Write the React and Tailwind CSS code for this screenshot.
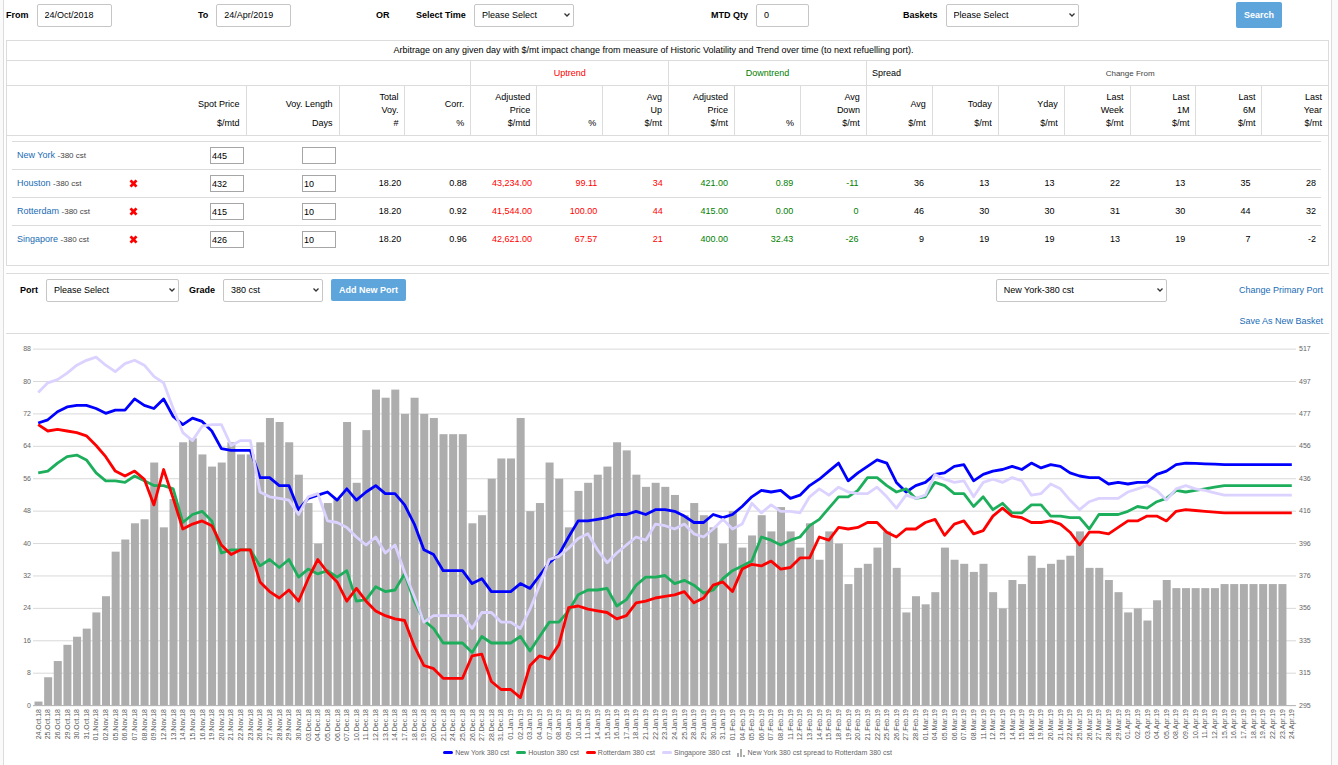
import { useState } from 'react'

const TREND_COLUMNS = [
  { label: 'Total Voy.', unit: '#' },
  { label: 'Corr.', unit: '%' },
  { label: 'Adjusted Price', unit: '$/mtd' },
  { label: '', unit: '%' },
  { label: 'Avg Up', unit: '$/mt' },
  { label: 'Adjusted Price', unit: '$/mt' },
  { label: '', unit: '%' },
  { label: 'Avg Down', unit: '$/mt' },
  { label: 'Avg', unit: '$/mt' },
  { label: 'Today', unit: '$/mt' },
  { label: 'Yday', unit: '$/mt' },
  { label: 'Last Week', unit: '$/mt' },
  { label: 'Last 1M', unit: '$/mt' },
  { label: 'Last 6M', unit: '$/mt' },
  { label: 'Last Year', unit: '$/mt' },
]

const PORTS = [
  { name: 'New York', spot: '445', days: '', values: [] },
  { name: 'Houston', spot: '432', days: '10', values: ['18.20', '0.88', '43,234.00', '99.11', '34', '421.00', '0.89', '-11', '36', '13', '13', '22', '13', '35', '28'] },
  { name: 'Rotterdam', spot: '415', days: '10', values: ['18.20', '0.92', '41,544.00', '100.00', '44', '415.00', '0.00', '0', '46', '30', '30', '31', '30', '44', '32'] },
  { name: 'Singapore', spot: '426', days: '10', values: ['18.20', '0.96', '42,621.00', '67.57', '21', '400.00', '32.43', '-26', '9', '19', '19', '13', '19', '7', '-2'] },
]

const FLAT_DAYS = 8

const NEW_YORK = [
  471, 473, 478, 481, 482, 482, 480, 477, 479, 479, 486, 482, 480, 486, 475, 470, 474, 472, 466, 455,
  454, 454, 454, 437, 437, 432, 432, 417, 424, 426, 428, 423, 430, 423, 428, 432, 427, 427, 420, 408,
  392, 389, 379, 379, 379, 371, 374, 366, 366, 366, 371, 368, 376, 384, 389, 400, 410, 410, 411, 412,
  414, 414, 416, 414, 417, 417, 416, 413, 409, 409, 414, 412, 414, 419, 425, 429, 428, 429, 424, 426,
  432, 436, 441, 446, 435, 440, 444, 448, 446, 434, 428, 432, 434, 439, 440, 444, 445, 435, 439, 441,
  442, 444, 442, 446, 443, 445, 444, 440, 438, 437, 437, 433, 434, 433, 434, 434, 439, 441, 445, 446,
  445.8, 445.5, 445.3, ...Array(FLAT_DAYS).fill(445),
]

const HOUSTON = [
  440, 441, 446, 450, 451, 448, 440, 435, 435, 434, 438, 435, 432, 432, 430, 409, 414, 416, 410, 390,
  392, 392, 392, 382, 386, 381, 386, 375, 380, 377, 379, 375, 379, 360, 361, 369, 366, 367, 377, 360,
  348, 343, 334, 334, 334, 328, 338, 334, 334, 334, 338, 329, 338, 347, 347, 354, 364, 367, 367, 368,
  357, 361, 370, 375, 375, 376, 371, 373, 370, 365, 367, 374, 379, 382, 385, 400, 398, 395, 398, 400,
  407, 411, 418, 425, 425, 429, 437, 437, 432, 428, 430, 424, 425, 434, 432, 427, 427, 419, 425, 417,
  421, 415, 415, 420, 420, 413, 413, 412, 412, 405, 414, 414, 414, 416, 419, 418, 422, 424, 429, 428,
  429, 430, 431, ...Array(FLAT_DAYS).fill(432),
]

const ROTTERDAM = [
  470, 466, 467, 466, 465, 463, 457, 450, 441, 438, 441, 436, 420, 442, 424, 405, 408, 410, 407, 395,
  389, 392, 392, 372, 366, 362, 367, 360, 374, 386, 378, 372, 360, 368, 360, 354, 351, 349, 348, 332,
  320, 318, 312, 312, 312, 326, 327, 310, 305, 305, 300, 320, 326, 324, 333, 356, 357, 355, 354, 353,
  349, 351, 359, 360, 362, 363, 364, 366, 359, 362, 370, 372, 366, 380, 383, 382, 385, 380, 381, 387,
  387, 400, 398, 406, 405, 406, 409, 409, 403, 400, 405, 405, 409, 411, 401, 408, 410, 402, 404, 413,
  418, 413, 412, 409, 409, 410, 408, 403, 395, 403, 403, 402, 406, 410, 410, 413, 413, 410, 416, 417,
  416.5, 416, 415.5, ...Array(FLAT_DAYS).fill(415),
]

const SINGAPORE = [
  490, 496, 498, 502, 507, 510, 512, 507, 503, 508, 510, 507, 500, 496, 480, 465, 460, 469, 470, 470,
  457, 460, 460, 428, 425, 424, 423, 414, 425, 427, 410, 409, 406, 400, 395, 400, 390, 395, 378, 363,
  347, 351, 351, 351, 351, 343, 353, 353, 347, 347, 343, 355, 370, 386, 388, 393, 399, 402, 392, 384,
  390, 395, 400, 398, 408, 407, 405, 408, 402, 400, 405, 411, 405, 408, 421, 415, 420, 416, 416, 415,
  425, 430, 426, 431, 428, 427, 427, 431, 425, 418, 426, 424, 426, 439, 436, 434, 435, 425, 434, 436,
  434, 437, 435, 426, 427, 433, 430, 423, 417, 422, 424, 424, 424, 428, 430, 432, 429, 423, 430, 432,
  430, 429, 427.5, ...Array(FLAT_DAYS).fill(426),
]

const SERIES = [
  { name: 'New York 380 cst', color: '#0000ff', data: NEW_YORK },
  { name: 'Houston 380 cst', color: '#1dae5c', data: HOUSTON },
  { name: 'Rotterdam 380 cst', color: '#ff0000', data: ROTTERDAM },
  { name: 'Singapore 380 cst', color: '#dcd2ff', data: SINGAPORE },
]

const MONTHS = ['Jan', 'Feb', 'Mar', 'Apr', 'May', 'Jun', 'Jul', 'Aug', 'Sep', 'Oct', 'Nov', 'Dec']
const RIGHT_TICKS = [295, 315, 335, 356, 376, 396, 416, 436, 456, 477, 497, 517]

function tradingDays() {
  const days = []
  const d = new Date(Date.UTC(2018, 9, 24))
  const end = Date.UTC(2019, 3, 24)
  while (d.getTime() <= end) {
    const wd = d.getUTCDay()
    if (wd !== 0 && wd !== 6) {
      days.push(`${String(d.getUTCDate()).padStart(2, '0')}.${MONTHS[d.getUTCMonth()]}.${String(d.getUTCFullYear()).slice(2)}`)
    }
    d.setUTCDate(d.getUTCDate() + 1)
  }
  return days
}

const DAYS = tradingDays()

// plot geometry in viewBox units
const BASE = 371.6
const TOP = 15.1
const xAt = i => 34.2 + i * 9.643
const yPrice = v => BASE - ((v - 295) / 222) * (BASE - TOP)
const ySpread = v => BASE - (v / 88) * (BASE - TOP)

const controlCls = 'h-[23px] rounded-xs border border-[#c6c6c6] bg-white px-[7px] outline-none focus:border-[#5ea5dc]'
const buttonCls = 'rounded-xs bg-[#5ea5dc] px-2 font-bold text-white hover:bg-[#4994cf]'
const linkCls = 'text-[#1a6cb5] hover:underline'

function Select({ width, option, label }) {
  return (
    <span className={`relative block ${width}`}>
      <select aria-label={label} className={`${controlCls} w-full appearance-none font-normal`}>
        <option>{option}</option>
      </select>
      <svg viewBox="0 0 6 4" className="pointer-events-none absolute top-[9px] right-1 h-1 w-[6px]" aria-hidden="true">
        <path d="M0.5 0.5 L3 3 L5.5 0.5" fill="none" stroke="#333" strokeWidth="1.3" />
      </svg>
    </span>
  )
}

function Filters() {
  const [from, setFrom] = useState('24/Oct/2018')
  const [to, setTo] = useState('24/Apr/2019')
  const [qty, setQty] = useState('0')

  return (
    <form
      onSubmit={e => e.preventDefault()}
      className="grid grid-cols-[192fr_178fr_40fr_295fr_192fr_333fr_95fr] items-center pt-[2px] pl-[2px]"
    >
      <label className="flex items-center gap-2 font-bold">
        From
        <input value={from} onChange={e => setFrom(e.target.value)} className={`${controlCls} w-[75px] font-normal`} />
      </label>
      <label className="flex items-center gap-2 font-bold">
        To
        <input value={to} onChange={e => setTo(e.target.value)} className={`${controlCls} w-[75px] font-normal`} />
      </label>
      <span className="font-bold">OR</span>
      <label className="flex items-center gap-2 font-bold">
        Select Time
        <Select width="w-[100px]" option="Please Select" />
      </label>
      <label className="flex items-center gap-2 font-bold">
        MTD Qty
        <input value={qty} onChange={e => setQty(e.target.value)} className={`${controlCls} w-[53px] font-normal`} />
      </label>
      <label className="flex items-center gap-2 font-bold">
        Baskets
        <Select width="w-[133px]" option="Please Select" />
      </label>
      <div>
        <button type="submit" className={`${buttonCls} h-[26px]`}>Search</button>
      </div>
    </form>
  )
}

function HeaderCell({ label, unit }) {
  return (
    <th className="border-l border-[#dcdcdc] px-[6px] py-[5px] text-right font-normal first:border-l-0">
      <div className="flex h-[26px] items-center justify-end leading-[13px]">
        <span className={label.startsWith('Spot') || label.startsWith('Voy') ? '' : 'w-min'}>{label}</span>
      </div>
      <div className="leading-[13px]">{unit}</div>
    </th>
  )
}

function valueColor(i) {
  if (i >= 2 && i <= 4) return 'text-[#ff0000]'
  if (i >= 5 && i <= 7) return 'text-[#008000]'
  return 'text-black'
}

function CrossIcon() {
  return (
    <svg viewBox="0 0 9 9" className="size-[9px]" aria-hidden="true">
      <path d="M2.5 0.5 L4.5 2.5 L6.5 0.5 L8.5 2.3 L6.4 4.5 L8.5 6.7 L6.5 8.5 L4.5 6.5 L2.5 8.5 L0.5 6.7 L2.6 4.5 L0.5 2.3 Z" fill="#ff0000" />
    </svg>
  )
}

function Arbitrage() {
  const [ports, setPorts] = useState(PORTS)

  function update(name, key, val) {
    setPorts(prev => prev.map(p => (p.name === name ? { ...p, [key]: val } : p)))
  }

  return (
    <section className="mt-3 mr-[2px] ml-[2px] border border-[#dcdcdc]">
      <p className="py-[3px] pr-7 text-center leading-[13px]">
        Arbitrage on any given day with $/mt impact change from measure of Historic Volatility and Trend over time (to next refuelling port).
      </p>
      <table aria-label="Arbitrage columns" className="w-full table-fixed border-collapse border-y border-[#dcdcdc]">
        <colgroup>
          <col className="w-[239px]" />
          <col className="w-[93px]" />
          {TREND_COLUMNS.map((c, i) => <col key={i} />)}
        </colgroup>
        <thead>
          <tr className="h-[25px] border-b border-[#dcdcdc]">
            <td colSpan={4} />
            <th colSpan={3} className="border-l border-[#dcdcdc] font-normal text-[#ff0000]">Uptrend</th>
            <th colSpan={3} className="border-l border-[#dcdcdc] font-normal text-[#008000]">Downtrend</th>
            <th className="border-l border-[#dcdcdc] pl-[5px] text-left font-normal">Spread</th>
            <th colSpan={6} className="text-[8px] font-normal text-[#444]">Change From</th>
          </tr>
          <tr>
            <HeaderCell label="Spot Price" unit="$/mtd" />
            <HeaderCell label="Voy. Length" unit="Days" />
            {TREND_COLUMNS.map((c, i) => <HeaderCell key={i} label={c.label} unit={c.unit} />)}
          </tr>
        </thead>
      </table>

      <div className="pt-[5px] pr-[7px] pb-[11px] pl-[5px]">
        <table aria-label="Ports" className="w-full table-fixed border-collapse">
          <colgroup>
            <col className="w-[114px]" />
            <col className="w-[80px]" />
            <col className="w-[92px]" />
            <col className="w-[43px]" />
            {TREND_COLUMNS.map((c, i) => <col key={i} />)}
          </colgroup>
          <tbody>
            {ports.map(p => (
              <tr key={p.name} className="h-7 border-t border-[#dcdcdc]">
                <td className="pl-[5px] whitespace-nowrap">
                  <a href="#port" className={linkCls}>{p.name}</a>{' '}
                  <span className="text-[8px] text-[#444]">-380 cst</span>
                </td>
                <td className="pl-[3px]">
                  {p.values.length > 0 && (
                    <button
                      type="button"
                      aria-label={`Remove ${p.name}`}
                      onClick={() => setPorts(prev => prev.filter(x => x.name !== p.name))}
                      className="flex"
                    >
                      <CrossIcon />
                    </button>
                  )}
                </td>
                <td className="pl-1">
                  <input
                    aria-label={`${p.name} spot price`}
                    value={p.spot}
                    onChange={e => update(p.name, 'spot', e.target.value)}
                    className="block h-[17px] w-[34px] border border-[#a6a6a6] px-px"
                  />
                </td>
                <td className="pl-1">
                  <input
                    aria-label={`${p.name} voyage length`}
                    value={p.days}
                    onChange={e => update(p.name, 'days', e.target.value)}
                    className="block h-[17px] w-[34px] border border-[#a6a6a6] px-px"
                  />
                </td>
                {TREND_COLUMNS.map((c, i) => (
                  <td key={i} className={`pr-[5px] text-right ${valueColor(i)}`}>{p.values[i]}</td>
                ))}
              </tr>
            ))}
          </tbody>
        </table>
      </div>
    </section>
  )
}

function PortControls() {
  return (
    <section className="mt-[7px] mr-[2px] ml-[2px] border-y border-[#dcdcdc] py-[5px]">
      <div className="grid grid-cols-[989fr_241fr_92fr] items-center">
        <div className="flex items-center pl-[14px]">
          <label className="flex items-center gap-2 font-bold">
            Port
            <Select width="w-[133px]" option="Please Select" />
          </label>
          <label className="ml-[10px] flex items-center gap-2 font-bold">
            Grade
            <Select width="w-[100px]" option="380 cst" />
          </label>
          <button type="button" className={`${buttonCls} ml-2 h-[22px]`}>Add New Port</button>
        </div>
        <Select width="w-[171px]" option="New York-380 cst" label="Primary port" />
        <a href="#primary" className={`${linkCls} pr-[6px] text-right whitespace-nowrap`}>Change Primary Port</a>
      </div>
      <div className="mt-[13px] pr-[6px] text-right leading-[13px]">
        <a href="#basket" className={linkCls}>Save As New Basket</a>
      </div>
    </section>
  )
}

function Chart() {
  return (
    <figure>
      <svg viewBox="0 0 1327 414" className="block w-full" role="img" aria-label="Port prices and spread">
        {RIGHT_TICKS.map((t, i) => (
          <g key={t} fontSize="7" fill="#666">
            <line x1="29" x2="1292" y1={ySpread(i * 8)} y2={ySpread(i * 8)} stroke="#d9d9d9" />
            <text x="27" y={ySpread(i * 8) + 2} textAnchor="end">{i * 8}</text>
            <text x="1295" y={ySpread(i * 8) + 2}>{t}</text>
          </g>
        ))}
        {DAYS.slice(0, -1).map((d, i) => {
          const y = ySpread(Math.floor(NEW_YORK[i] - ROTTERDAM[i]))
          return <rect key={d} x={xAt(i) - 3.7} y={y} width="8" height={BASE - y} fill="#adadad" />
        })}
        <line x1="29" x2="1292" y1={BASE} y2={BASE} stroke="#b5b5b5" />
        {SERIES.map(s => (
          <polyline
            key={s.name}
            points={s.data.map((v, i) => `${xAt(i).toFixed(1)},${yPrice(v).toFixed(1)}`).join(' ')}
            fill="none"
            stroke={s.color}
            strokeWidth="2.8"
            strokeLinejoin="round"
          />
        ))}
        {DAYS.map((d, i) => (
          <text key={d} transform={`translate(${xAt(i) + 2.4} 375) rotate(-90)`} textAnchor="end" fontSize="7" fill="#555">{d}</text>
        ))}
      </svg>
      <figcaption className="flex justify-center gap-[7px] pb-[6px] text-[7px] leading-[10px] text-[#666]">
        {SERIES.map(s => (
          <span key={s.name} className="flex items-center gap-[2px]">
            <span className="h-[3px] w-[10px] rounded-xs" style={{ backgroundColor: s.color }} />
            {s.name}
          </span>
        ))}
        <span className="flex items-center gap-[2px]">
          <svg viewBox="0 0 8 8" className="size-2" aria-hidden="true">
            <path d="M0 4h2v4H0zM3 0h2v8H3zM6 6h2v2H6z" fill="#adadad" />
          </svg>
          New York 380 cst spread to Rotterdam 380 cst
        </span>
      </figcaption>
    </figure>
  )
}

export default function App() {
  return (
    <div className="min-h-screen bg-[#fafafa] pr-[6px] pl-[3px] font-['Liberation_Sans',Arial,sans-serif] text-[9px] leading-[13px] text-black">
      <main className="min-h-screen border-x border-[#dcdcdc] bg-white">
        <Filters />
        <Arbitrage />
        <PortControls />
        <Chart />
      </main>
    </div>
  )
}
